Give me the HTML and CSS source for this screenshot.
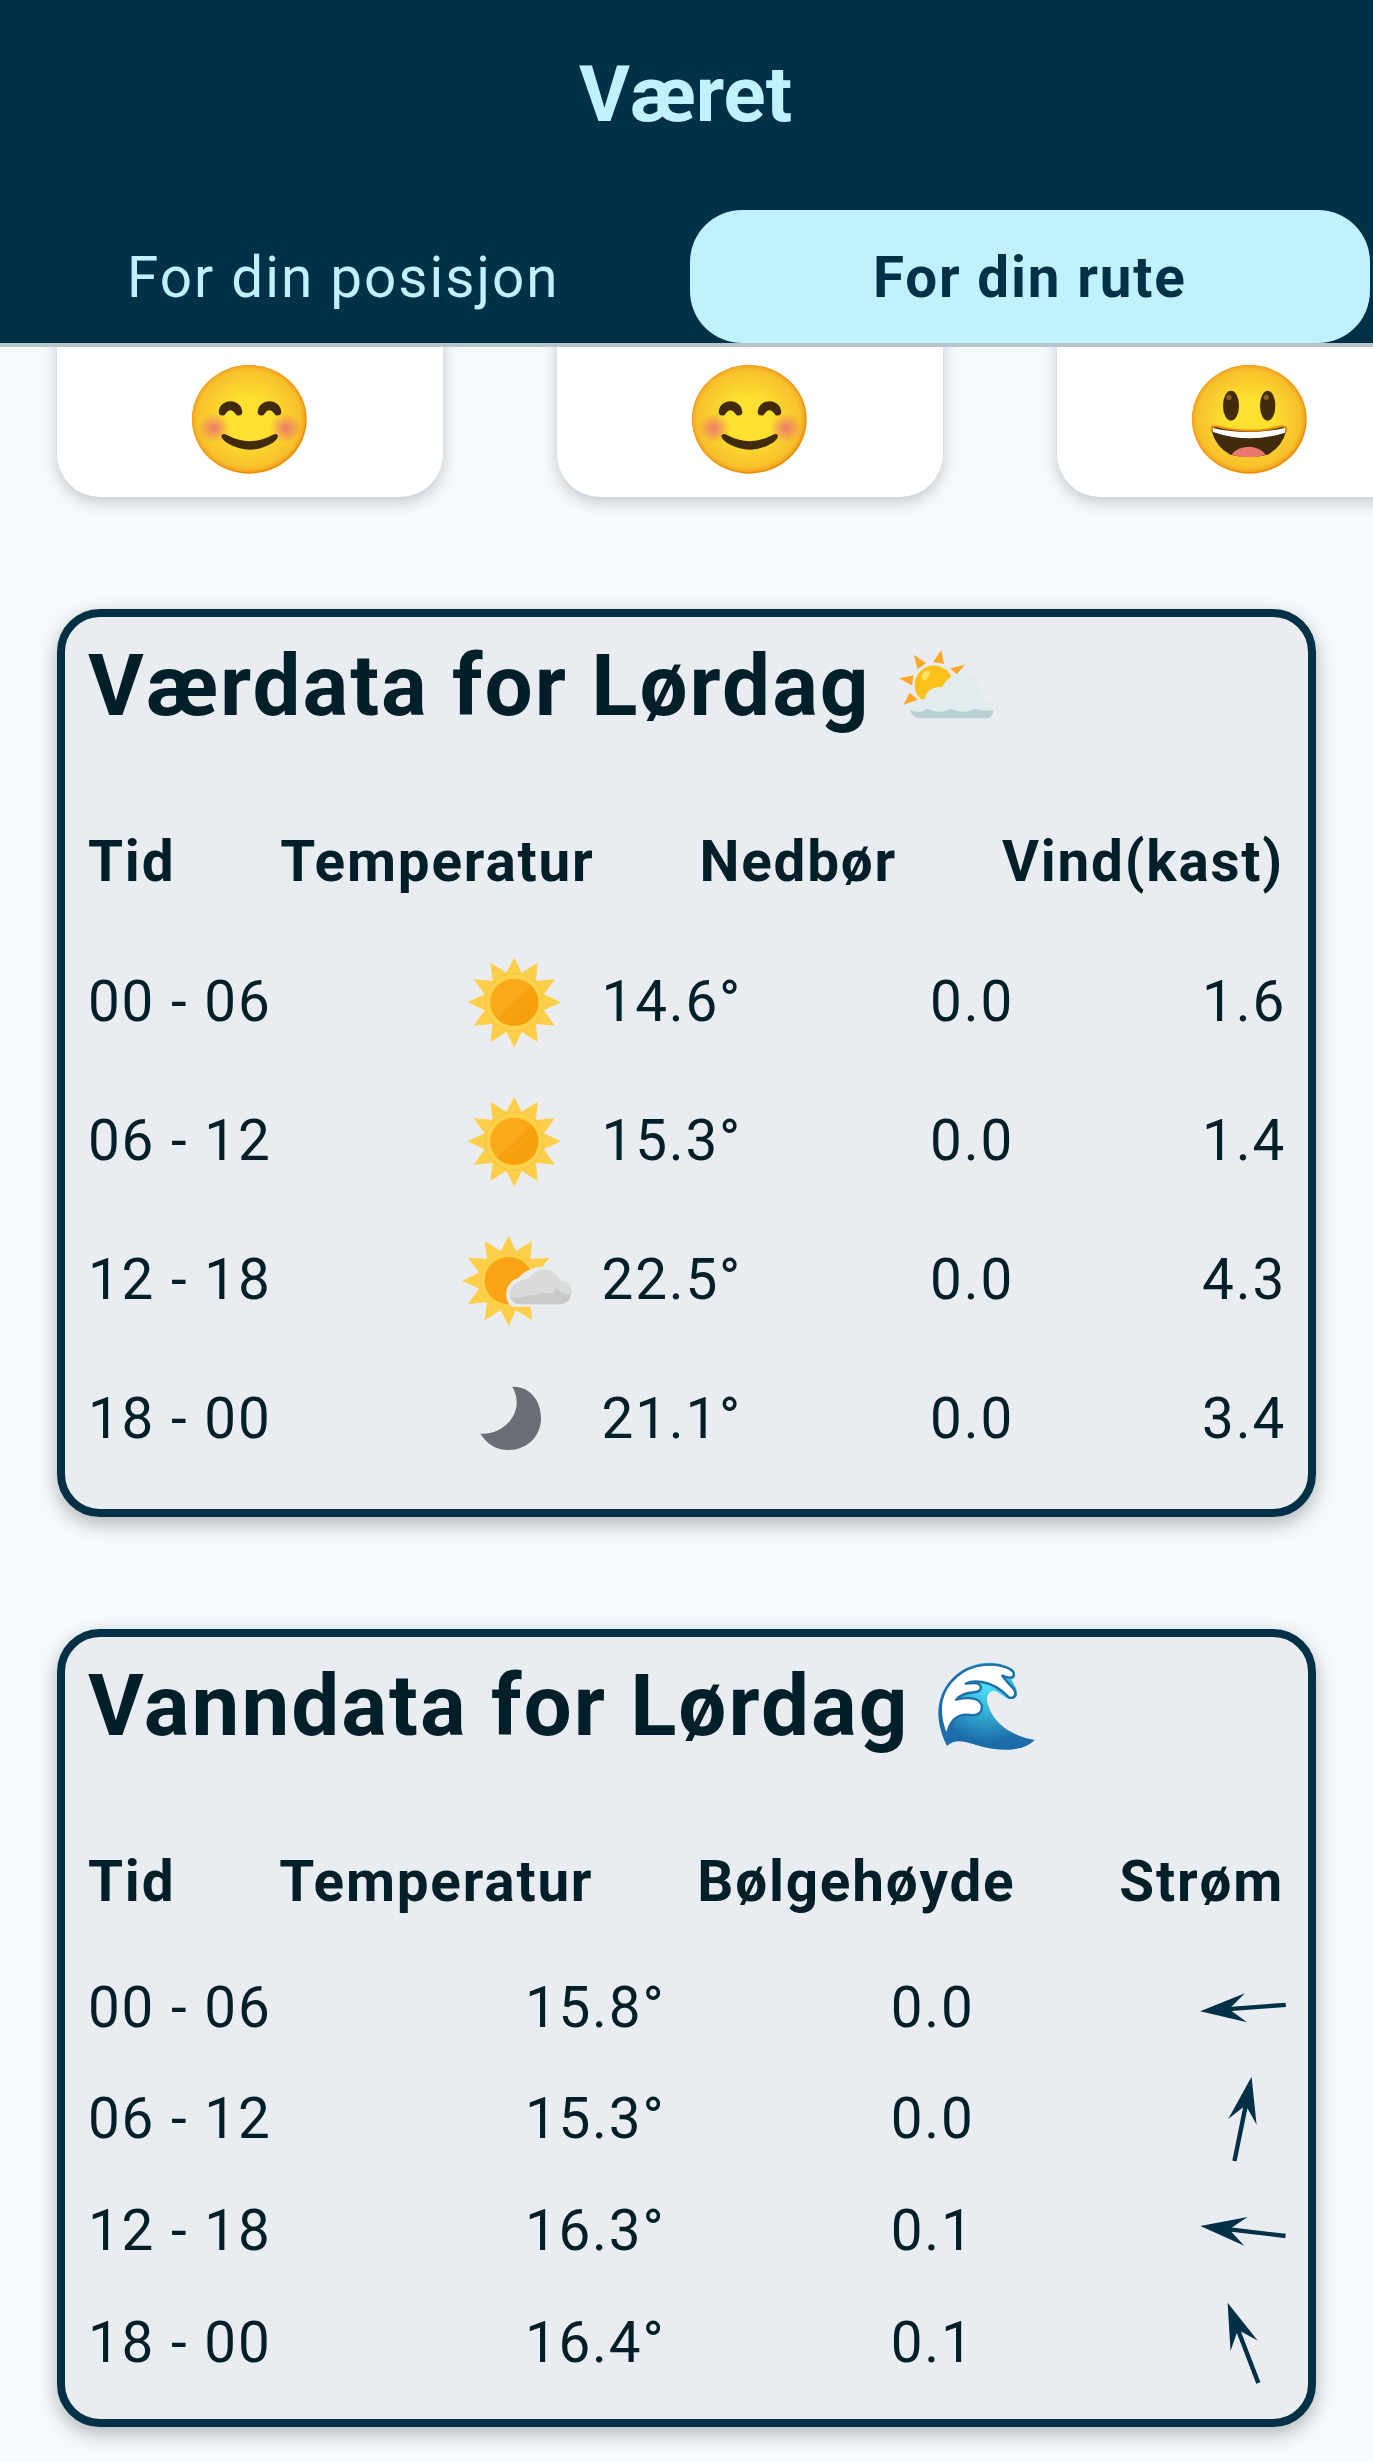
FILE: index.html
```html
<!DOCTYPE html>
<html lang="no">
<head>
<meta charset="utf-8">
<title>Været</title>
<link rel="stylesheet" href="styles.css">
</head>
<body>
<svg class="defs" aria-hidden="true">
  <defs>
    <radialGradient id="face" cx=".5" cy=".5" r=".5">
      <stop offset=".4" stop-color="#fde030"/><stop offset=".92" stop-color="#f7c02b"/><stop offset="1" stop-color="#f4a223"/>
    </radialGradient>
    <radialGradient id="blush">
      <stop offset=".1" stop-color="#ed7770" stop-opacity=".85"/><stop offset="1" stop-color="#ed7770" stop-opacity="0"/>
    </radialGradient>
    <linearGradient id="disc" x1="0" y1="0" x2="1" y2="1">
      <stop offset=".48" stop-color="#fba81a"/><stop offset=".52" stop-color="#f5a00c"/>
    </linearGradient>
    <radialGradient id="sea" gradientUnits="userSpaceOnUse" cx="318" cy="170" r="190">
      <stop offset="0" stop-color="#50e2fb"/><stop offset=".4" stop-color="#35b4d8"/><stop offset=".9" stop-color="#1b6ca8"/>
    </radialGradient>
    <g id="head">
      <ellipse cx="659" cy="238" rx="172" ry="163" fill="#eb8f00"/>
      <ellipse cx="657" cy="236" rx="170" ry="160" fill="url(#face)"/>
    </g>
    <symbol id="smile" viewBox="487 75 345 327">
      <use href="#head"/>
      <ellipse cx="553" cy="264" rx="47" ry="44" fill="url(#blush)"/>
      <ellipse cx="769" cy="264" rx="47" ry="44" fill="url(#blush)"/>
      <path d="M567 219C567 172 638 172 638 219Q633 230 620 225Q602 196 585 225Q571 230 567 219ZM684 219C684 172 755 172 755 219Q750 230 737 225Q719 196 702 225Q688 230 684 219ZM575 288Q579 277 592 285Q659 322 729 285Q742 278 745 288Q744 298 728 309Q662 349 592 309Q576 297 575 288Z" fill="#422b0d"/>
    </symbol>
    <symbol id="grin" viewBox="456 75 345 327">
      <use href="#head" x="-31"/>
      <ellipse cx="573" cy="197" rx="24" ry="45" fill="#422b0d"/>
      <ellipse cx="683" cy="197" rx="23" ry="45" fill="#422b0d"/>
      <circle cx="567" cy="172" r="8" fill="#896024"/><circle cx="679" cy="172" r="8" fill="#896024"/>
      <path d="M514 269Q514 257 530 259Q627 285 724 259Q741 257 738 274Q727 320 683 344Q627 357 571 344Q526 320 514 269Z" fill="#422b0d"/>
      <path d="M575 344Q589 322 627 320Q661 322 677 344Q627 359 575 344Z" fill="#ed7770"/>
      <path d="M516 263Q627 289 737 263L735 278Q627 313 519 276Z" fill="#fff"/>
      <path d="M515 275Q511 256 530 259Q627 285 724 259Q742 257 738 275" fill="none" stroke="#eb8f00" stroke-width="6"/>
    </symbol>
    <g id="rays">
      <path d="M0-134L22-89 70-119 65-65 122-69 89-24 140 0 89 24 122 70 65 65 70 119 22 89 0 136-24 89-72 119-65 65-122 70-89 24-140 0-89-24-122-69-65-65-72-119-24-89Z" fill="#ffcf4a"/>
    </g>
    <symbol id="sun" viewBox="57 35 426 360">
      <g transform="translate(220 216)">
        <use href="#rays"/>
        <ellipse rx="86" ry="87" fill="#fdd248" stroke="#f6c64b" stroke-width="4"/>
        <ellipse rx="72.500" ry="71" fill="url(#disc)"/>
        <path d="M-48 30L30-43M-34 54L61-32" stroke="#ffb63c" stroke-width="1.500"/>
      </g>
    </symbol>
    <symbol id="sun-cloud" viewBox="57 28 426 360">
      <g transform="translate(203 210)">
        <use href="#rays"/>
        <ellipse rx="84" ry="83" fill="#ffcf45" stroke="#e9c269" stroke-width="1.500"/>
        <ellipse rx="72" ry="71" fill="#f8a414"/>
      </g>
      <path d="M217 288C185 277 188 215 231 203C249 185 270 165 320 170L360 155V288Z" fill="#e9edf2"/>
      <path d="M222 279C198 268 201 221 237 211C249 203 262 208 268 198C285 168 342 168 357 208C387 213 397 237 388 257C384 274 370 282 350 281H240Z" fill="#dadada"/>
      <path d="M208 259Q236 264 272 253Q291 256 307 245Q325 253 342 245Q340 232 350 236L361 246Q377 254 390 248Q389 279 350 281H240Q216 280 208 259Z" fill="#c8c9c8"/>
    </symbol>
    <symbol id="moon" viewBox="57 444 426 360">
      <path d="M214 527C268 525 300 570 300 621C300 677 258 717 202 717C166 716 140 701 118 668C190 674 256 600 214 527Z" fill="#6a6e75"/>
    </symbol>
    <symbol id="arrow" viewBox="-43 -43 86 86">
      <path d="M0-43L14.500 3 2.200-11.500V43H-2.200V-11.500L-14.500 3Z" fill="#023047"/>
    </symbol>
  </defs>
</svg>

<header class="top">
  <h1 class="top-title">Været</h1>
  <nav class="tabs">
    <a class="tab">For din posisjon</a>
    <a class="tab tab-active"><span class="pill">For din rute</span></a>
  </nav>
</header>

<main class="content">
  <section class="days">
    <div class="day"><svg class="emoji"><use href="#smile"/></svg></div>
    <div class="day"><svg class="emoji"><use href="#smile"/></svg></div>
    <div class="day"><svg class="emoji"><use href="#grin"/></svg></div>
  </section>

  <section class="card">
    <h2 class="card-title">Værdata for Lørdag
      <svg class="title-icon cloudy" viewBox="520 178 225 208" preserveAspectRatio="none">
        <path d="M555 192L584 217 564 236ZM620 178L627 220 601 214ZM677 222L657 251 641 234ZM520 263L554 254 551 286ZM545 307L565 328 531 343Z" fill="#ffa726"/>
        <ellipse cx="603" cy="283" rx="46" ry="58" fill="#fcc21b"/>
        <ellipse cx="583" cy="255" rx="8" ry="16" fill="#ffe265" transform="rotate(20 583 255)"/>
        <path d="M549 358C547 335 565 329 581 326C582 303 601 287 622 290C632 265 650 248 673 248C704 250 719 291 716 325C733 329 744 340 744 360L730 374H566Z" fill="#e2ebee"/>
        <path d="M546 358Q570 373 587 355Q616 373 643 356Q673 373 701 356Q720 364 744 360Q743 376 731 384H566Q551 380 546 358Z" fill="#b9ced3"/>
      </svg>
    </h2>
    <div class="row head"><span>Tid</span><span>Temperatur</span><span>Nedbør</span><span>Vind(kast)</span></div>
    <div class="row air"><span>00 - 06</span><span class="reading"><svg class="sky"><use href="#sun"/></svg>14.6°</span><span>0.0</span><span>1.6</span></div>
    <div class="row air"><span>06 - 12</span><span class="reading"><svg class="sky"><use href="#sun"/></svg>15.3°</span><span>0.0</span><span>1.4</span></div>
    <div class="row air"><span>12 - 18</span><span class="reading"><svg class="sky"><use href="#sun-cloud"/></svg>22.5°</span><span>0.0</span><span>4.3</span></div>
    <div class="row air"><span>18 - 00</span><span class="reading"><svg class="sky"><use href="#moon"/></svg>21.1°</span><span>0.0</span><span>3.4</span></div>
  </section>

  <section class="card">
    <h2 class="card-title">Vanndata for Lørdag
      <svg class="title-icon wave" viewBox="168 98 290 264" preserveAspectRatio="none">
        <path d="M195 350C155 270 160 195 218 140C270 92 350 90 390 120C402 130 402 148 386 150C407 180 410 202 395 208C370 214 360 190 334 184C315 190 311 205 317 225C334 285 390 320 457 332C425 366 360 367 300 352C260 342 225 322 195 350Z" fill="url(#sea)"/>
        <path d="M194 320C160 240 178 180 222 143C270 99 345 98 384 120C396 126 400 142 386 145Q372 145 360 139C371 155 383 166 395 180C406 198 393 209 380 204C357 180 330 163 300 158C278 154 265 156 251 163C277 160 298 159 296 178C292 190 276 188 260 191Q235 196 222 211C250 205 290 202 299 228C301 247 292 259 265 257C225 251 202 275 194 320Z" fill="#fff" stroke="#1d6fa9" stroke-width="7" stroke-linejoin="round"/>
      </svg>
    </h2>
    <div class="row head"><span>Tid</span><span>Temperatur</span><span>Bølgehøyde</span><span>Strøm</span></div>
    <div class="row sea"><span>00 - 06</span><span class="water">15.8°</span><span>0.0</span><svg class="arrow" style="rotate:-94.2deg"><use href="#arrow"/></svg></div>
    <div class="row sea"><span>06 - 12</span><span class="water">15.3°</span><span>0.0</span><svg class="arrow" style="rotate:11.5deg"><use href="#arrow"/></svg></div>
    <div class="row sea"><span>12 - 18</span><span class="water">16.3°</span><span>0.1</span><svg class="arrow" style="rotate:-83.4deg"><use href="#arrow"/></svg></div>
    <div class="row sea"><span>18 - 00</span><span class="water">16.4°</span><span>0.1</span><svg class="arrow" style="rotate:-21deg"><use href="#arrow"/></svg></div>
  </section>
</main>
</body>
</html>
```
FILE: styles.css
```css
* { box-sizing: border-box; }

body {
  margin: 0;
  height: 2462px;
  overflow: hidden;
  background: #f5fafd;
  color: #001f28;
  font: 400 56.6px/86px Roboto, sans-serif;
  letter-spacing: 1.8px;
}

.defs { display: block; width: 0; height: 0; }

.top {
  display: flex;
  flex-direction: column;
  justify-content: space-between;
  height: 347px;
  background: #023047;
  color: #c1f0ff;
  border-bottom: 4px solid #b8c4c9;
}

.top-title {
  margin: 0;
  padding: 45px 2px 0 0;
  font-size: 78px;
  line-height: 100px;
  font-weight: 700;
  letter-spacing: 0;
  text-align: center;
}

.tabs { display: grid; grid-template-columns: 1fr 1fr; height: 136px; }
.tab { display: flex; align-items: center; justify-content: center; padding-top: 5px; letter-spacing: 2px; }

.tab-active { padding: 3px 3px 0; color: #023047; font-weight: 700; letter-spacing: 1.8px; }

.pill {
  flex: 1;
  height: 133px;
  line-height: 135px;
  text-align: center;
  background: #c1f0ff;
  border-radius: 52px;
}

.days {
  display: flex;
  gap: 114px;
  height: 262px;
  padding-left: 57px;
  overflow: hidden;
}

.day {
  flex: 0 0 386px;
  height: 200px;
  margin-top: -50px;
  padding: 68px 2px 0 0;
  background: #fff;
  border-radius: 43px;
  box-shadow: 0 5px 16px rgba(0, 20, 30, .22);
}

.emoji { display: block; width: 115px; height: 109px; margin: 0 auto; }

.card {
  margin: 0 57px 112px;
  padding: 12px 22px 21px 23px;
  border: 8px solid #023047;
  border-radius: 43px;
  background: #e9edf2;
  box-shadow: 0 7px 20px rgba(0, 0, 0, .28);
}

.card-title {
  display: flex;
  align-items: center;
  gap: 28px;
  margin: 0 0 76px;
  font-size: 85.4px;
  line-height: 114px;
  font-weight: 700;
  letter-spacing: 2px;
}

.cloudy { width: 95px; height: 69px; margin-bottom: 4px; }
.wave { width: 97px; height: 88px; }

.row { display: flex; align-items: center; justify-content: space-between; white-space: nowrap; }
.head { margin-bottom: 27px; padding-right: 2px; font-weight: 700; }
.air { height: 139px; }
.sea { height: 111.6px; }

.reading { display: flex; align-items: center; }
.sky { width: 142px; height: 120px; }
.water { margin-left: 28px; }
.arrow { width: 86px; height: 86px; overflow: visible; }
```
